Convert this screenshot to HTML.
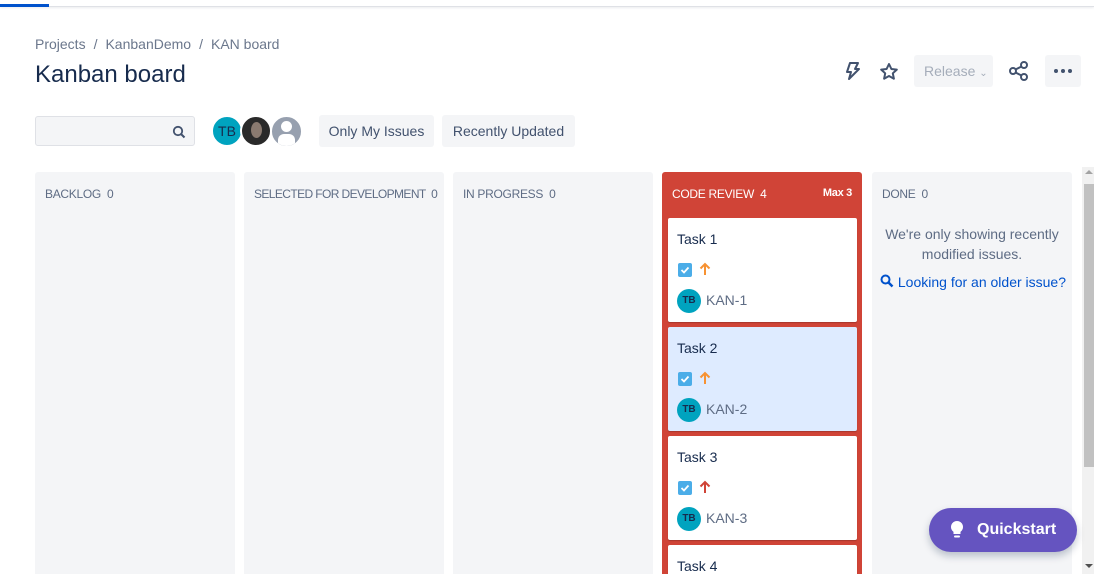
<!DOCTYPE html>
<html style="width:1094px;height:574px;overflow:hidden"><head><meta charset="utf-8">
<style>
*{box-sizing:border-box;margin:0;padding:0}
body{width:1094px;height:574px;overflow:hidden;background:#fff;font-family:"Liberation Sans",sans-serif;color:#172b4d;position:relative}
.abs{position:absolute}
.topbar{left:0;top:0;width:1094px;height:7px;border-bottom:1px solid #dfe1e6;box-shadow:0 1px 2px rgba(9,30,66,.08)}
.topbar i{position:absolute;left:0;top:4px;width:49px;height:3px;background:#0052cc}
.crumb{left:35px;top:36px;font-size:14px;color:#6b778c}
.crumb span{margin:0 8px}
h1{position:absolute;left:35px;top:61px;font-size:24px;font-weight:400;color:#172b4d}
.search{left:35px;top:116px;width:160px;height:30px;background:#f4f5f7;border:1px solid #dfe1e6;border-radius:3px}
.btn{top:115px;height:32px;background:#f4f5f7;border-radius:3px;font-size:14px;color:#42526e;line-height:32px;text-align:center}
.col{top:172px;width:200px;height:402px;background:#f4f5f7;border-radius:3px 3px 0 0;overflow:hidden}
.col .h{position:absolute;left:10px;top:15px;font-size:12px;color:#5e6c84;white-space:nowrap;letter-spacing:-0.3px}
.cr{background:#d04437}
.cr .h{color:#fff}
.card{position:absolute;left:6px;width:189px;height:104px;background:#fff;border-radius:2px;box-shadow:0 1px 1px rgba(0,0,0,.2)}
.card .t{position:absolute;left:9px;top:13px;font-size:14px;color:#172b4d}
.card .cb{position:absolute;left:10px;top:45px;width:14px;height:14px;background:#4bade8;border-radius:2px}
.card .ar{position:absolute;left:31px;top:43px}
.card .av{position:absolute;left:9px;top:71px;width:24px;height:24px;border-radius:50%;background:#00a3bf;color:#172b4d;font-size:10px;font-weight:bold;text-align:center;line-height:24px}
.card .k{position:absolute;left:38px;top:74px;font-size:14px;color:#5e6c84}
</style></head><body>
<div class="abs topbar"><i></i></div>
<div class="abs crumb">Projects<span>/</span>KanbanDemo<span>/</span>KAN board</div>
<h1>Kanban board</h1>

<svg class="abs" style="left:842px;top:61px" width="20" height="20" viewBox="0 0 20 20"><path d="M8 2h8l-3 6h4L7 18l2-7H5z" fill="none" stroke="#42526e" stroke-width="2" stroke-linejoin="round"/></svg>
<svg class="abs" style="left:879px;top:62px" width="20" height="20" viewBox="0 0 20 20"><path d="M10 2l2.4 5 5.4.6-4 3.7 1.1 5.4L10 14l-4.9 2.7 1.1-5.4-4-3.7L7.6 7z" fill="none" stroke="#42526e" stroke-width="2" stroke-linejoin="round"/></svg>
<div class="abs" style="left:914px;top:55px;width:79px;height:32px;background:#f4f5f7;border-radius:3px;font-size:14px;color:#a5adba;line-height:32px;padding-left:10px">Release <span style="font-size:10px">&#8964;</span></div>
<svg class="abs" style="left:1008px;top:60px" width="22" height="22" viewBox="0 0 22 22"><circle cx="16" cy="5" r="3" fill="none" stroke="#42526e" stroke-width="2"/><circle cx="5" cy="11" r="3" fill="none" stroke="#42526e" stroke-width="2"/><circle cx="16" cy="17" r="3" fill="none" stroke="#42526e" stroke-width="2"/><path d="M7.5 9.5l6-3M7.5 12.5l6 3" stroke="#42526e" stroke-width="2"/></svg>
<div class="abs" style="left:1045px;top:55px;width:36px;height:32px;background:#f4f5f7;border-radius:3px"><svg width="36" height="32"><circle cx="11" cy="16" r="2" fill="#42526e"/><circle cx="18" cy="16" r="2" fill="#42526e"/><circle cx="25" cy="16" r="2" fill="#42526e"/></svg></div>

<div class="abs search"><svg class="abs" style="left:136px;top:8px" width="14" height="14" viewBox="0 0 14 14"><circle cx="6" cy="6" r="4.2" fill="none" stroke="#42526e" stroke-width="1.8"/><path d="M9 9l3.5 3.5" stroke="#42526e" stroke-width="2"/></svg></div>
<div class="abs" style="left:211px;top:115px;width:32px;height:32px;border-radius:50%;background:#00a3bf;border:2px solid #fff;font-size:14px;line-height:28px;text-align:center;color:#172b4d">TB</div>
<div class="abs" style="left:240px;top:115px;width:32px;height:32px;border-radius:50%;background:#2a2a2a;border:2px solid #fff;overflow:hidden"><div style="position:absolute;left:9px;top:5px;width:11px;height:16px;border-radius:50%;background:#8a7a70"></div></div>
<div class="abs" style="left:270px;top:115px;width:33px;height:33px;border-radius:50%;background:#97a0af;border:2px solid #fff;overflow:hidden"><div style="position:absolute;left:9px;top:4px;width:11px;height:11px;border-radius:50%;background:#fff"></div><div style="position:absolute;left:6px;top:17px;width:17px;height:12px;border-radius:6px 6px 2px 2px;background:#fff"></div></div>
<div class="abs btn" style="left:319px;width:115px">Only My Issues</div>
<div class="abs btn" style="left:442px;width:133px">Recently Updated</div>

<div class="abs col" style="left:35px"><div class="h">BACKLOG&nbsp; 0</div></div>
<div class="abs col" style="left:244px"><div class="h" style="letter-spacing:-0.6px">SELECTED FOR DEVELOPMENT&nbsp; 0</div></div>
<div class="abs col" style="left:453px"><div class="h">IN PROGRESS&nbsp; 0</div></div>
<div class="abs col cr" style="left:662px"><div class="h">CODE REVIEW&nbsp; 4</div><div class="h" style="left:auto;right:10px;font-weight:bold;font-size:11px">Max 3</div>
 <div class="card" style="top:46px"><div class="t">Task 1</div><div class="cb"><svg width="14" height="14"><path d="M3.5 7l2.5 2.5 4.5-5" fill="none" stroke="#fff" stroke-width="1.8"/></svg></div><svg class="ar" width="12" height="16"><path d="M6 14V3M1.5 7.5L6 3l4.5 4.5" fill="none" stroke="#f79232" stroke-width="2"/></svg><div class="av">TB</div><div class="k">KAN-1</div></div>
 <div class="card" style="top:155px;background:#deebff"><div class="t">Task 2</div><div class="cb"><svg width="14" height="14"><path d="M3.5 7l2.5 2.5 4.5-5" fill="none" stroke="#fff" stroke-width="1.8"/></svg></div><svg class="ar" width="12" height="16"><path d="M6 14V3M1.5 7.5L6 3l4.5 4.5" fill="none" stroke="#f79232" stroke-width="2"/></svg><div class="av">TB</div><div class="k">KAN-2</div></div>
 <div class="card" style="top:264px"><div class="t">Task 3</div><div class="cb"><svg width="14" height="14"><path d="M3.5 7l2.5 2.5 4.5-5" fill="none" stroke="#fff" stroke-width="1.8"/></svg></div><svg class="ar" width="12" height="16"><path d="M6 14V3M1.5 7.5L6 3l4.5 4.5" fill="none" stroke="#d04437" stroke-width="2"/></svg><div class="av">TB</div><div class="k">KAN-3</div></div>
 <div class="card" style="top:373px;height:29px;border-radius:2px 2px 0 0"><div class="t">Task 4</div></div>
</div>
<div class="abs col" style="left:872px"><div class="h">DONE&nbsp; 0</div>
 <div class="abs" style="left:0;top:52px;width:200px;text-align:center;font-size:14px;line-height:20px;color:#5e6c84">We're only showing recently<br>modified issues.</div>
 <div class="abs" style="left:8px;top:102px;font-size:14px;color:#0052cc;white-space:nowrap"><svg width="14" height="14" viewBox="0 0 14 14" style="vertical-align:-1px"><circle cx="5.5" cy="5.5" r="4" fill="none" stroke="#0052cc" stroke-width="2"/><path d="M8.5 8.5l4 4" stroke="#0052cc" stroke-width="2.5"/></svg> Looking for an older issue?</div>
</div>

<div class="abs" style="left:1082px;top:167px;width:12px;height:407px;background:#f1f1f1"></div>
<div class="abs" style="left:1084px;top:184px;width:10px;height:283px;background:#c1c1c1"></div>
<div class="abs" style="left:1085px;top:170px;width:0;height:0;border-left:4px solid transparent;border-right:4px solid transparent;border-bottom:4px solid #a3a3a3"></div>
<div class="abs" style="left:1085px;top:564px;width:0;height:0;border-left:4px solid transparent;border-right:4px solid transparent;border-top:4px solid #505050"></div>

<div class="abs" style="left:929px;top:508px;width:148px;height:44px;border-radius:22px;background:#6554c0;box-shadow:0 4px 8px rgba(9,30,66,.25);color:#fff;font-size:16px;font-weight:bold;line-height:44px;padding-left:48px">Quickstart
 <svg class="abs" style="left:20px;top:12px" width="16" height="20" viewBox="0 0 16 20"><path d="M8 1a6 6 0 0 0-3.5 10.9V14h7v-2.1A6 6 0 0 0 8 1z" fill="#fff"/><rect x="5" y="15.5" width="6" height="2" rx="1" fill="#fff"/></svg>
</div>
</body></html>
